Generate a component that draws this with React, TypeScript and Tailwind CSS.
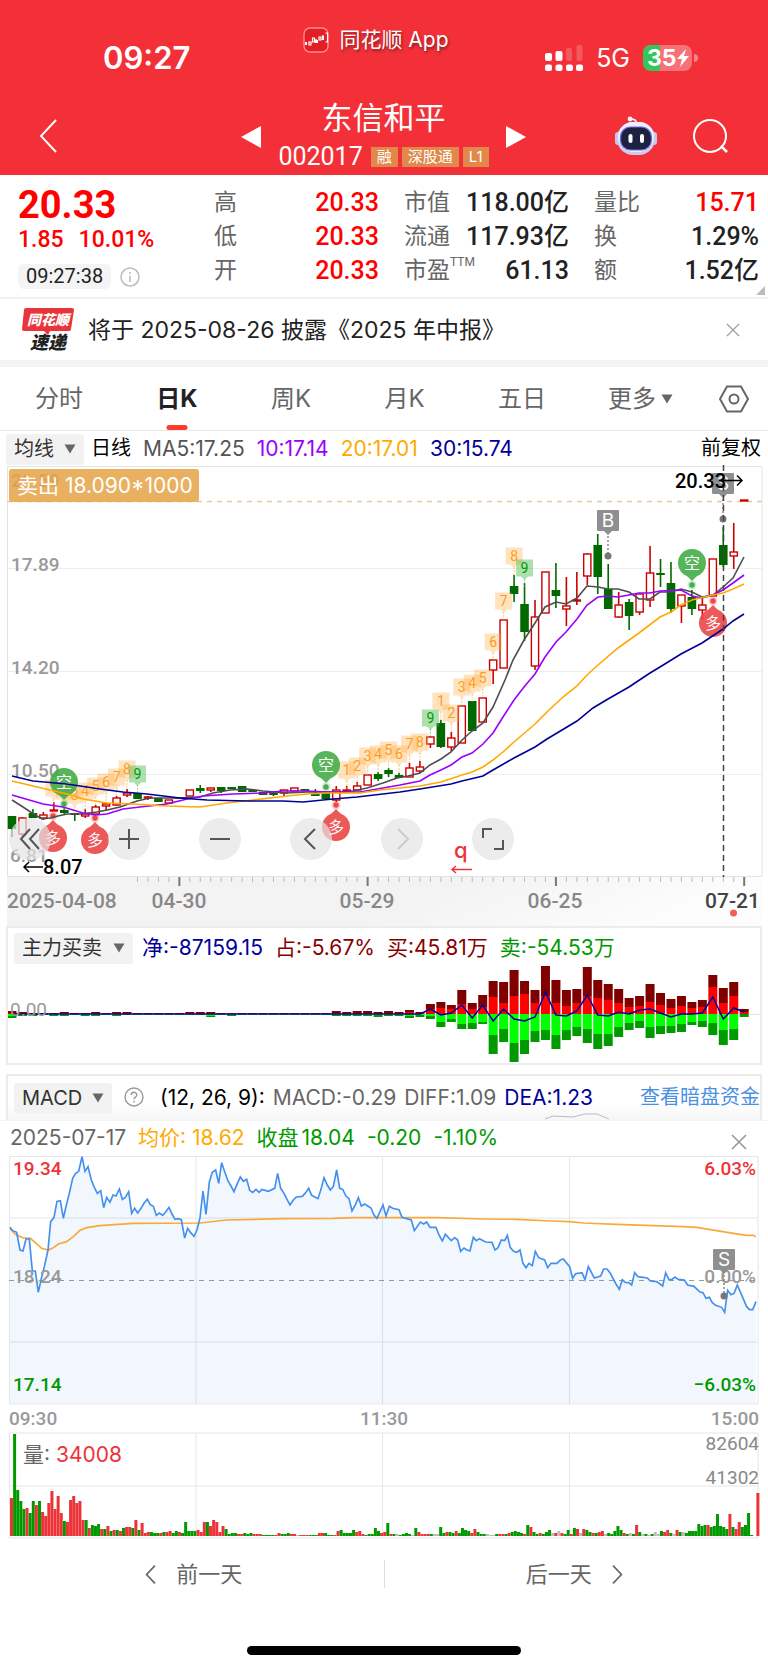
import type { ReactNode } from "react";

type Candle = [kind: "r" | "g", top: number, bottom: number, high: number, low: number];

const STEP = 10.46;
const cx = (index: number) => 12 + index * STEP;

const CANDLES: Candle[] = [
  ["g", 356, 369, 356, 377], ["r", 358, 374, 357, 377], ["g", 353, 358, 349, 358], ["r", 355, 358, 352, 360],
  ["r", 350, 351, 342, 351], ["g", 350, 353, 347, 354], ["g", 353, 355, 353, 361], ["r", 354, 356, 349, 358],
  ["r", 347, 354, 345, 354], ["r", 344, 346, 343, 350], ["r", 338, 345, 336, 346], ["r", 333, 335, 329, 337],
  ["g", 333, 339, 333, 339], ["r", 337, 338, 336, 340], ["g", 338, 342, 338, 342], ["r", 340, 343, 340, 343],
  ["g", 337, 339, 337, 339], ["r", 330, 336, 330, 336], ["g", 328, 331, 325, 333], ["r", 328, 330, 328, 332],
  ["g", 327, 331, 327, 333], ["g", 327, 329, 327, 329], ["g", 326, 332, 326, 332], ["g", 330, 332, 330, 332],
  ["g", 332, 335, 332, 335], ["g", 333, 335, 332, 336], ["r", 330, 333, 330, 336], ["r", 328, 331, 328, 331],
  ["g", 329, 331, 329, 331], ["g", 334, 336, 329, 336], ["g", 333, 339, 333, 339], ["r", 330, 340, 326, 342],
  ["r", 330, 331, 326, 332], ["r", 326, 330, 322, 330], ["r", 315, 325, 315, 325], ["g", 314, 319, 312, 321],
  ["g", 310, 314, 308, 317], ["g", 315, 318, 313, 318], ["r", 308, 317, 303, 317], ["r", 307, 311, 301, 313],
  ["r", 277, 284, 276, 288], ["g", 263, 287, 260, 288], ["r", 278, 287, 272, 291], ["r", 246, 283, 246, 283],
  ["g", 241, 271, 241, 271], ["r", 238, 262, 238, 262], ["r", 200, 210, 199, 224], ["r", 160, 208, 160, 208],
  ["g", 126, 134, 115, 142], ["g", 144, 172, 123, 181], ["r", 157, 206, 140, 210], ["r", 112, 153, 112, 153],
  ["g", 130, 136, 103, 148], ["r", 146, 149, 117, 166], ["r", 140, 141, 112, 145], ["r", 94, 116, 93, 125],
  ["g", 85, 117, 74, 134], ["g", 129, 149, 104, 149], ["r", 145, 157, 132, 158], ["g", 142, 156, 139, 170],
  ["r", 134, 152, 134, 155], ["r", 113, 140, 86, 147], ["g", 113, 115, 99, 127], ["g", 123, 149, 102, 153],
  ["r", 135, 146, 135, 163], ["g", 137, 149, 130, 155], ["r", 145, 150, 137, 160], ["r", 99, 136, 99, 136],
  ["g", 85, 105, 67, 107], ["r", 92, 96, 63, 109], ["r", 40, 41, 40, 41],
];

const MA_LINES = [
  {
    color: "#4d4d4d",
    points:
      "12,340 23,347 32,353 42,359 50,358 58,356 67,354 80,354 97,352 107,350 120,347 137,341 150,338 180,338 200,337 213,333 230,330 247,329 263,331 287,333 307,332 327,332 343,332 353,331 367,328 383,323 397,318 408,316 420,313 430,305 441,299 451,292 462,280 472,271 483,263 493,247 505,220 513,200 524,180 535,163 545,147 556,142 566,144 577,138 587,126 598,127 608,129 618,129 629,132 639,139 650,139 660,132 671,132 681,129 692,132 702,137 713,135 723,127 733,118 744,97",
  },
  {
    color: "#9900ff",
    points:
      "12,335 43,344 63,347 83,353 95,355 107,354 123,349 140,347 167,344 187,339 203,336 233,334 263,333 283,331 307,331 327,332 360,332 383,328 400,325 420,321 430,315 441,310 451,305 462,297 472,293 483,284 493,273 503,257 514,240 524,227 535,214 545,197 556,182 566,172 577,159 587,145 598,137 608,136 618,137 629,135 639,133 650,133 660,131 681,130 692,136 702,138 713,135 723,130 733,123 744,115",
  },
  {
    color: "#ffaa00",
    points:
      "12,321 33,326 50,330 67,334 83,339 107,343 133,344 167,346 200,347 227,343 253,340 287,336 307,334 327,333 360,333 380,330 400,328 420,326 441,322 462,315 472,312 483,307 493,300 503,292 514,282 535,264 547,252 563,237 577,226 587,215 598,205 618,188 639,173 660,157 671,152 681,145 692,140 713,135 723,133 733,129 744,124",
  },
  {
    color: "#000099",
    points:
      "12,316 33,321 67,324 100,329 123,332 147,334 180,338 207,340 247,341 283,341 303,342 333,339 357,337 400,332 420,329 451,324 462,321 483,316 493,310 514,298 535,287 547,279 577,261 593,248 608,239 629,227 650,213 660,207 681,194 702,183 723,169 733,161 744,154",
  },
];

// TD sequence tags: [candle index, digit, centre y]
const TD_TAGS = [
  [4, 1, 328], [5, 2, 331], [6, 3, 335], [7, 4, 331], [8, 5, 326], [9, 6, 322], [10, 7, 317], [11, 8, 309], [12, 9, 314],
  [32, 1, 310], [33, 2, 306], [34, 3, 296], [35, 4, 294], [36, 5, 290], [37, 6, 294], [38, 7, 284], [39, 8, 282], [40, 9, 258],
  [41, 1, 241], [42, 2, 253], [43, 3, 227], [44, 4, 223], [45, 5, 218], [46, 6, 182], [47, 7, 141], [48, 8, 96], [49, 9, 108],
];

// [dark red, red, green, dark green] bar ends, measured from the zero line
const FLOW: number[][] = [
  [3, 1, 2, 4], [2, 1, 1, 2], [1, 1, 1, 2], [1, 1, 1, 1], [1, 1, 1, 2], [2, 1, 1, 2], [1, 1, 1, 1], [1, 1, 1, 2],
  [2, 1, 1, 2], [1, 1, 1, 1], [2, 1, 1, 2], [2, 1, 1, 1], [1, 1, 1, 1], [1, 1, 1, 1], [1, 1, 1, 1], [1, 1, 1, 1],
  [1, 1, 1, 1], [2, 1, 1, 1], [2, 1, 1, 1], [2, 1, 2, 3], [1, 1, 1, 1], [1, 1, 1, 2], [1, 1, 1, 1], [1, 1, 1, 1],
  [1, 1, 1, 1], [1, 1, 1, 1], [1, 1, 1, 1], [1, 1, 1, 1], [1, 1, 1, 1], [1, 1, 1, 1], [1, 1, 1, 1], [3, 1, 1, 2],
  [2, 1, 1, 2], [3, 1, 1, 2], [3, 1, 1, 2], [2, 1, 1, 3], [3, 1, 1, 2], [2, 1, 1, 2], [4, 2, 2, 4], [2, 1, 1, 3],
  [10, 5, 2, 5], [12, 6, 8, 13], [9, 5, 5, 8], [24, 10, 10, 15], [11, 5, 9, 15], [19, 7, 8, 10], [33, 17, 21, 40],
  [32, 11, 15, 28], [44, 18, 29, 48], [33, 20, 26, 40], [24, 11, 17, 28], [48, 18, 16, 26], [34, 11, 21, 35],
  [24, 8, 16, 26], [25, 11, 13, 22], [47, 18, 15, 29], [34, 16, 20, 35], [30, 14, 20, 32], [25, 11, 13, 23],
  [16, 7, 9, 16], [18, 8, 7, 14], [30, 12, 13, 24], [21, 9, 12, 20], [15, 6, 12, 19], [18, 8, 10, 18], [12, 6, 8, 11],
  [14, 7, 7, 13], [39, 27, 9, 21], [26, 11, 16, 31], [32, 18, 15, 26], [5, 2, 0, 3],
];

const NET_FLOW = [
  5, -1, 1, 9, -4, 9, -7, 5, -5, -7, -3, 22, -1, -2, 3, 19, -1, -2, 2, 0, 4, 5, 1, -3, 0, 0, 1, 17, -5, 6, 2,
];

// both intraday lines are stored in thirds of a chart unit
const PRICE_POINTS =
  "30,322 38,332 50,337 60,390 69,393 78,357 88,357 97,453 106,453 115,517 124,475 133,440 144,390 152,305 162,292 171,244 181,242 190,295 199,255 208,220 218,175 227,160 236,154 246,110 255,154 264,140 274,180 283,202 292,220 302,212 311,263 320,232 330,247 339,225 348,228 358,207 367,238 376,232 386,215 395,280 404,265 413,279 423,265 432,250 442,238 451,254 460,259 469,286 478,279 488,286 497,276 507,262 516,282 525,298 535,296 544,299 554,354 563,325 572,338 582,349 591,330 600,293 609,213 618,283 628,186 637,157 647,150 656,190 665,128 674,155 684,183 693,198 702,215 712,190 721,171 730,184 740,178 749,211 758,217 768,208 777,217 786,208 805,214 824,205 833,160 842,205 852,220 861,238 870,255 880,240 889,231 907,229 917,218 926,205 935,226 954,236 963,208 972,173 982,195 991,210 1000,200 1010,150 1019,205 1028,208 1038,228 1047,236 1056,273 1066,255 1075,233 1084,258 1094,252 1113,264 1122,285 1131,295 1149,255 1158,288 1168,259 1178,265 1197,269 1206,292 1234,300 1243,332 1261,306 1271,312 1280,306 1290,322 1308,322 1317,345 1327,363 1336,343 1354,362 1364,353 1373,360 1382,394 1392,384 1401,390 1410,393 1420,352 1429,362 1438,356 1457,366 1476,367 1485,390 1494,383 1504,360 1514,362 1522,346 1531,383 1541,394 1550,397 1560,390 1569,430 1578,443 1587,430 1597,437 1606,394 1616,413 1634,420 1643,443 1653,430 1671,430 1681,420 1690,417 1709,440 1718,475 1727,461 1746,458 1755,479 1765,440 1783,474 1802,468 1811,447 1821,447 1830,458 1848,492 1858,508 1867,479 1876,487 1886,488 1895,495 1904,458 1914,470 1942,474 1951,483 1970,485 1988,498 1997,458 2007,479 2016,478 2025,471 2035,478 2053,480 2063,495 2082,499 2100,516 2109,518 2118,535 2128,532 2137,548 2147,556 2165,562 2174,577 2183,511 2193,524 2202,520 2212,495 2221,516 2240,560 2249,569 2258,569 2268,545";

const AVERAGE_POINTS =
  "30,325 45,342 70,354 90,354 105,367 125,385 145,390 160,383 175,372 200,365 220,350 240,331 260,323 300,317 400,310 600,309 680,300 850,296 1000,295 1060,293 1310,293 1450,297 1550,298 1650,303 1709,305 1750,309 1850,313 2050,320 2090,322 2150,332 2200,340 2240,346 2260,346 2268,350";

// one token per minute: colour (red, green, flat) and height
const VOLUME =
  "r38 g102 g46 g35 g27 r28 g23 g35 r31 g35 r24 r20 r33 r45 r27 r40 r23 g15 r14 r36 r40 r33 r35 r16 g16 r8 g11 g10 g12 r7 g7 r10 g5 r6 g6 r5 g8 r9 r9 g8 r16 g6 r13 r3 r4 g4 g3 g3 r3 g4 r4 r5 g3 g5 r4 g3 g14 g5 g5 g5 r6 r4 r14 g14 r10 r16 r14 r4 r10 g7 " +
  "g2 g3 g3 r2 r2 g3 g2 g3 r2 r2 r2 g1 g1 g1 g1 r1 r3 g2 g2 g3 r2 r2 f1 r1 r1 r1 g1 g1 g1 r3 r3 g3 g1 g1 r1 r5 g6 g3 g3 g3 g6 r4 r5 r2 g1 g2 g2 g8 g5 r3 r4 g13 r2 g2 f2 g1 g2 g3 g2 f1 g8 r4 r2 r2 r2 g2 f2 f2 g9 g3 r4 g4 g3 r5 g3 g8 g6 g5 r3 r7 " +
  "g4 g2 g2 f2 f1 f1 g2 r2 r2 g2 r3 g4 g5 g4 g3 r2 g11 r9 g4 g2 r3 g2 g4 g6 f3 r3 f5 r3 g2 g6 r2 g8 r7 f3 r7 g6 g4 r3 g3 r4 r5 f2 g3 g2 g5 g10 g6 r3 g2 f3 g2 r11 g4 f2 g2 f1 g2 f4 f2 g5 r4 r6 g3 f2 r6 g4 f4 g3 g5 g5 g5 g12 g10 g11 r11 g9 g10 g22 g10 g9 g7 r22 g9 r7 r14 g9 g11 g23 g1 f0 r43";

const VOLUME_COLORS: Record<string, string> = { r: "#ee3338", g: "#009900", f: "#bbbbbb" };

const QUOTES: { label: ReactNode; value: string; up?: boolean }[][] = [
  [
    { label: "高", value: "20.33", up: true },
    { label: "低", value: "20.33", up: true },
    { label: "开", value: "20.33", up: true },
  ],
  [
    { label: "市值", value: "118.00亿" },
    { label: "流通", value: "117.93亿" },
    {
      label: (
        <>
          市盈<sup className="-top-3 text-[12px]">TTM</sup>
        </>
      ),
      value: "61.13",
    },
  ],
  [
    { label: "量比", value: "15.71", up: true },
    { label: "换", value: "1.29%" },
    { label: "额", value: "1.52亿" },
  ],
];

function Caret({ className = "" }: { className?: string }) {
  return (
    <svg viewBox="0 0 12 10" className={`h-[10px] w-3 fill-[#666] ${className}`} aria-hidden="true">
      <path d="M0.5 0.5h11L6 9.5z" />
    </svg>
  );
}

function Chevron({ direction, className = "" }: { direction: "left" | "right"; className?: string }) {
  return (
    <svg viewBox="0 0 18 34" className={className} fill="none" stroke="currentColor" aria-hidden="true">
      <path d={direction === "left" ? "M17 1 2 17l15 16" : "M1 1l15 16L1 33"} />
    </svg>
  );
}

function Cross({ className }: { className: string }) {
  return (
    <svg viewBox="0 0 16 16" className={className} fill="none" stroke="#999" strokeWidth="1.6" aria-hidden="true">
      <path d="M1 1l14 14M15 1 1 15" />
    </svg>
  );
}

function IndicatorSelect({ label, options, className }: { label: string; options: string[]; className: string }) {
  return (
    <div className={`relative h-[31px] shrink-0 ${className}`}>
      <select
        aria-label={label}
        className="h-full w-full appearance-none rounded-[3px] bg-[#f2f2f2] pl-2 text-[20px] leading-[31px] text-[#333]"
      >
        {options.map((option) => (
          <option key={option}>{option}</option>
        ))}
      </select>
      <Caret className="pointer-events-none absolute top-[11px] right-[8px]" />
    </div>
  );
}

function StatusBar() {
  return (
    <div className="grid h-[84px] grid-cols-[1fr_auto_1fr] items-start pr-4">
      <div className="pt-[37px] pl-[103px] text-[31px] leading-[42px] font-semibold">09:27</div>
      <div className="flex items-center gap-[10px] pt-[25px] text-[21px] leading-[30px] [text-shadow:1px_2px_3px_rgba(0,0,0,0.45)]">
        <svg viewBox="0 0 26 26" className="h-[26px] w-[26px]" aria-hidden="true">
          <rect x="1" y="1" width="24" height="24" rx="6" fill="#e21f26" stroke="#ff8a8e" strokeWidth="1.4" />
          <g fill="none" stroke="#fff" strokeWidth="1.2">
            <path d="M3 15v3M6 15h2v3H6zM9.500 11h2v4h-2zM13 12v4M16 10h2v3h-2zM20 8v5M22.500 6h2v9h-2" />
          </g>
          <path d="M2 15h2v3H2zM12 13h3v3h-3zM19 9h2v4h-2z" fill="#fff" />
        </svg>
        同花顺 App
      </div>
      <div className="flex items-center justify-end gap-[13px] pt-[37px] pr-[54px]">
        <svg viewBox="0 0 38 26" className="h-[26px] w-[38px] fill-white" aria-hidden="true">
          <rect x="0" y="8" width="7" height="8" rx="2" />
          <rect x="10.500" y="6" width="7" height="10" rx="2" />
          <rect x="21" y="3" width="6" height="13" rx="2" opacity="0.2" />
          <rect x="31.500" y="0" width="6" height="16" rx="2" opacity="0.2" />
          <rect x="0" y="19.500" width="7" height="6.500" rx="2" />
          <rect x="10.500" y="19.500" width="7" height="6.500" rx="2" />
          <rect x="21" y="19.500" width="7" height="6.500" rx="2" />
          <rect x="31" y="19.500" width="7" height="6.500" rx="2" />
        </svg>
        <span className="text-[25px] leading-[42px]">5G</span>
        <svg viewBox="0 0 55 26" className="h-[26px] w-[55px]" aria-label="35%">
          <rect width="49" height="26" rx="8" fill="#fff" opacity="0.32" />
          <path d="M8 0h9v26H8a8 8 0 0 1-8-8V8a8 8 0 0 1 8-8z" fill="#33c75a" />
          <path d="M51 9a4 4 0 0 1 0 8z" fill="#fff" opacity="0.4" />
          <text x="4" y="21" fill="#fff" className="text-[23px] font-bold">35</text>
          <path d="M43 4 34 14h5l-2 8 9-11h-5z" fill="#fff" />
        </svg>
      </div>
    </div>
  );
}

function StockTag({ children }: { children: ReactNode }) {
  return <span className="bg-[#e0894a] px-[6px] text-[15px] leading-5">{children}</span>;
}

function Header() {
  return (
    <header className="bg-[#f33038] text-white">
      <StatusBar />
      <div className="grid h-[91px] grid-cols-[1fr_auto_1fr] items-start pr-[40px] pl-[39px]">
        <button type="button" aria-label="返回" className="mt-[35px] w-[18px]">
          <Chevron direction="left" className="h-[34px] w-[18px] stroke-2" />
        </button>
        <div className="flex items-start gap-[17px]">
          <button type="button" aria-label="上一只" className="mt-[42px]">
            <svg viewBox="0 0 20 22" className="h-[22px] w-5 fill-white" aria-hidden="true">
              <path d="M20 0v22L0 11z" />
            </svg>
          </button>
          <div className="flex flex-col items-center pt-3">
            <h1 className="text-[31px] leading-[44px]">东信和平</h1>
            <div className="flex items-center gap-1 pt-px">
              <span className="mr-1 font-[Roboto] text-[25px] leading-8">002017</span>
              <StockTag>融</StockTag>
              <StockTag>深股通</StockTag>
              <StockTag>L1</StockTag>
            </div>
          </div>
          <button type="button" aria-label="下一只" className="mt-[42px]">
            <svg viewBox="0 0 20 22" className="h-[22px] w-5 fill-white" aria-hidden="true">
              <path d="M0 0v22l20-11z" />
            </svg>
          </button>
        </div>
        <div className="flex justify-end gap-9 pt-8">
          <button type="button" aria-label="智能助手">
            <svg viewBox="0 0 42 40" className="h-10 w-[42px]" aria-hidden="true">
              <path d="M21 8c1-3-1-5-5-5" fill="none" stroke="#e8e9fb" strokeWidth="2" />
              <circle cx="15" cy="3" r="2.400" fill="#f2f3ff" />
              <rect x="0" y="16" width="6" height="13" rx="3" fill="#c5c8ea" />
              <rect x="36" y="16" width="6" height="13" rx="3" fill="#c5c8ea" />
              <rect x="2" y="6" width="38" height="33" rx="16" fill="#c9ccee" />
              <rect x="3" y="6" width="36" height="30" rx="15" fill="#eff0ff" />
              <rect x="5.500" y="11" width="31" height="23" rx="10" fill="#1b2340" stroke="#7d68dd" strokeWidth="1.200" />
              <rect x="13.500" y="18" width="4" height="9" rx="2" fill="#fff" />
              <rect x="25" y="18" width="4" height="9" rx="2" fill="#fff" />
            </svg>
          </button>
          <button type="button" aria-label="搜索">
            <svg viewBox="0 0 35 36" className="h-9 w-[35px]" fill="none" stroke="#fff" strokeWidth="2" aria-hidden="true">
              <circle cx="17" cy="18" r="16" />
              <path d="M28 28l6 6" strokeWidth="2.500" />
            </svg>
          </button>
        </div>
      </div>
    </header>
  );
}

function QuotePanel() {
  return (
    <section className="relative flex h-[124px] border-b-2 border-[#f2f2f2] pt-[11px] pr-[9px] font-[Roboto,'Noto_Sans_CJK_SC',sans-serif]">
      <div className="w-[214px] shrink-0 pl-[18px]">
        <p className="text-[38px] leading-[38px] font-bold text-[#ff0000]">20.33</p>
        <p className="pt-px text-[23px] leading-[30px] font-medium text-[#ff0000]">
          <span>1.85</span>
          <span className="ml-[15px]">10.01%</span>
        </p>
        <div className="mt-[9px] flex items-center gap-[9px]">
          <time className="rounded-md bg-[#f4f4f4] px-2 text-[20px] leading-[25px] text-[#222]">09:27:38</time>
          <svg viewBox="0 0 20 20" className="h-5 w-5" fill="none" stroke="#bbb" strokeWidth="1.500" aria-hidden="true">
            <circle cx="10" cy="10" r="9" />
            <path d="M10 8.500V15M10 5v2" />
          </svg>
        </div>
      </div>
      <div className="grid flex-1 grid-cols-3 gap-x-[25px]">
        {QUOTES.map((column, columnIndex) => (
          <dl key={columnIndex}>
            {column.map((item, index) => (
              <div key={index} className="flex h-[34px] items-center justify-between">
                <dt className="text-[23px] leading-[34px] whitespace-nowrap text-[#666]">{item.label}</dt>
                <dd
                  className={`text-[25px] leading-[34px] font-medium whitespace-nowrap ${item.up ? "text-[#ff0000]" : "text-[#222]"}`}
                >
                  {item.value}
                </dd>
              </div>
            ))}
          </dl>
        ))}
      </div>
      <svg viewBox="0 0 9 9" className="absolute right-[3px] bottom-[2px] h-[9px] w-[9px] fill-[#bbb]" aria-hidden="true">
        <path d="M9 0v9H0z" />
      </svg>
    </section>
  );
}

function NewsRow() {
  return (
    <section className="flex h-[61px] items-center pr-7 pl-[22px]">
      <svg viewBox="0 0 52 43" className="h-[43px] w-[52px]" role="img" aria-label="同花顺速递">
        <path d="M4 0h46q2 0 2 2l-3 19q0 2-2 2H28l-2 4-4-4H2q-2 0-2-2L2 2q0-2 2-2z" fill="#e8343a" />
        <text x="26" y="17" textAnchor="middle" fill="#fff" className="text-[14px] font-black italic">同花顺</text>
        <text x="26" y="41" textAnchor="middle" fill="#222" className="text-[18px] font-black italic">速递</text>
      </svg>
      <a href="#report" className="ml-[14px] flex-1 text-[23px] leading-8 text-[#222]">
        将于 2025-08-26 披露《2025 年中报》
      </a>
      <button type="button" aria-label="关闭公告">
        <Cross className="h-[14px] w-[14px]" />
      </button>
    </section>
  );
}

function PeriodTabs() {
  return (
    <nav className="flex h-[71px] items-center border-t-[7px] border-b border-t-[#f4f4f4] border-b-[#e8e8e8] pr-[19px] pl-[35px] text-[24px] leading-8 text-[#666]">
      <div className="flex h-full flex-1 items-center justify-between">
        <button type="button">分时</button>
        <button type="button" aria-current="page" className="relative h-full font-bold text-[#222]">
          日K
          <span className="absolute bottom-0 left-1/2 h-[5px] w-[21px] -translate-x-1/2 rounded-sm bg-[#ff3b30]" />
        </button>
        <button type="button">周K</button>
        <button type="button">月K</button>
        <button type="button">五日</button>
      </div>
      <button type="button" className="ml-[62px] flex items-center gap-[5px]">
        更多
        <Caret />
      </button>
      <button type="button" aria-label="设置" className="ml-[46px]">
        <svg viewBox="0 0 30 28" className="h-7 w-[30px]" fill="none" stroke="#666" strokeWidth="2" aria-hidden="true">
          <path d="M8 1.500h14L29 14l-7 12.500H8L1 14z" />
          <circle cx="15" cy="14" r="4.500" />
        </svg>
      </button>
    </nav>
  );
}

function Balloon({ x, y, kind }: { x: number; y: number; kind: "空" | "多" }) {
  const isShort = kind === "空";
  const color = isShort ? "#45ad48" : "#ec4646";
  const dir = isShort ? 1 : -1;
  return (
    <g>
      <circle cx={x} cy={y + dir * 22} r="4.500" fill={color} opacity="0.25" />
      <circle cx={x} cy={y + dir * 22} r="2.700" fill={color} />
      <g fill={color} opacity="0.9">
        <circle cx={x} cy={y} r="14" />
        <path d={`M${x - 6} ${y + dir * 12}h12L${x} ${y + dir * 18}z`} />
      </g>
      <text x={x} y={y + 6} textAnchor="middle" fill="#fff" className="text-[16px]">
        {kind}
      </text>
    </g>
  );
}

function TradeFlag({ x, y, label, dot }: { x: number; y: number; label: string; dot: number }) {
  return (
    <g>
      <path d={`M${x} ${y + 22}V${dot}`} stroke="#888" strokeDasharray="2 2" strokeWidth="1.500" />
      <circle cx={x} cy={dot} r="3.500" fill="#777" />
      <rect x={x - 11} y={y} width="22" height="21" rx="1" fill="#8f8f8f" />
      <path d={`M${x - 4} ${y + 21}h8l-4 4z`} fill="#8f8f8f" />
      <text x={x} y={y + 17} textAnchor="middle" fill="#fff" className="text-[19px]">
        {label}
      </text>
    </g>
  );
}

function CandleChart() {
  return (
    <svg viewBox="0 5 768 461" className="block w-full" role="img" aria-label="日K线图">
      <defs>
        <linearGradient id="axis" x1="0" x2="1" y1="0" y2="0.150">
          <stop offset="0.6" stopColor="#f3f3f3" />
          <stop offset="1" stopColor="#fdfdfd" />
        </linearGradient>
      </defs>
      <rect x="7" y="417" width="755" height="49" fill="url(#axis)" />
      <path d="M7 108.500H762M7 211.500H762M7 314.500H762" stroke="#ededed" />
      <path d="M7.500 416.500V6.500H762V416.500z" fill="none" stroke="#e4e4e4" />
      <path d="M7 41.500H762" stroke="#e6c79c" strokeWidth="1.500" strokeDasharray="5 5" />

      <g fill="#999" className="font-[Roboto] text-[19px] font-medium">
        <text x="11" y="27">21.59</text>
        <text x="11" y="111">17.89</text>
        <text x="11" y="214">14.20</text>
        <text x="11" y="317">10.50</text>
        <text x="10" y="402">6.81</text>
      </g>

      {CANDLES.map(([kind, top, bottom, high, low], index) => {
        const x = cx(index);
        const height = Math.max(bottom - top, 1);
        return kind === "g" ? (
          <g key={index} fill="#006a00">
            <rect x={x - 0.8} y={high} width="1.600" height={low - high} />
            <rect x={x - 4.3} y={top} width="8.600" height={height} />
          </g>
        ) : (
          <g key={index} stroke="#cc0000" fill="#fff">
            <path d={`M${x} ${high}V${low}`} strokeWidth="1.600" />
            <rect x={x - 3.6} y={top} width="7.200" height={height} strokeWidth="1.400" />
          </g>
        );
      })}

      {TD_TAGS.map(([index, digit, y]) => {
        const x = cx(index);
        const isNine = digit === 9;
        const color = isNine ? "#4cba4c" : "#ffa734";
        return (
          <g key={`${index}-${digit}`}>
            <path d={`M${x} ${y + 11}v9`} stroke={color} strokeDasharray="2 1" opacity="0.6" />
            <path
              d={`M${x - 8.5} ${y - 8.5}h17v17h-5l-3.500 3.500-3.500-3.500h-5z`}
              fill={color}
              opacity={isNine ? 0.45 : 0.32}
            />
            <text
              x={x}
              y={y + 5}
              textAnchor="middle"
              fill={isNine ? "#00990a" : "#ff9c1c"}
              className="font-[Roboto] text-[14px]"
            >
              {digit}
            </text>
          </g>
        );
      })}

      <Balloon x={64} y={322} kind="空" />
      <Balloon x={53} y={378} kind="多" />
      <Balloon x={95} y={380} kind="多" />
      <Balloon x={326} y={305} kind="空" />
      <Balloon x={336} y={367} kind="多" />
      <Balloon x={692} y={103} kind="空" />
      <Balloon x={713} y={163} kind="多" />

      {MA_LINES.map((line) => (
        <polyline key={line.color} points={line.points} fill="none" stroke={line.color} strokeWidth="1.600" />
      ))}

      <TradeFlag x={608} y={50} label="B" dot={96} />
      <TradeFlag x={723} y={13} label="S" dot={59} />
      <path d="M723.500 5V417" stroke="#444" strokeWidth="1.500" strokeDasharray="6 4" />

      <g fill="none" stroke="#000" strokeWidth="1.500">
        <path d="M723 20.500h19M737 15.500l5 5-5 5" />
        <path d="M43 407H24M29 402l-5 5 5 5" />
      </g>
      <g className="font-[Roboto] text-[20px] font-medium">
        <text x="675" y="28">20.33</text>
        <text x="43" y="414">8.07</text>
      </g>
      <text x="454" y="398" fill="#ee3338" className="text-[22px] font-medium">q</text>
      <path d="M472 409.500h-20M456 406l-4 3.500 4 3.500" fill="none" stroke="#ee3338" strokeWidth="1.500" />

      <rect x="9" y="9" width="190" height="33" rx="3" fill="#e6a245" opacity="0.85" />
      <text x="17" y="33" fill="#fff" className="text-[21px]">卖出 18.090*1000</text>

      {CANDLES.map((_, index) =>
        index < 12 ? null : (
          <path
            key={index}
            d={`M${cx(index)} 417v${index % 18 === 16 ? 9 : 5}`}
            stroke={index % 18 === 16 ? "#777" : "#bbb"}
            strokeWidth={index % 18 === 16 ? 2 : 1}
          />
        ),
      )}
      <g fill="#888" className="font-[Roboto] text-[21px] font-medium">
        <text x="7" y="448">2025-04-08</text>
        <text x="179" y="448" textAnchor="middle">04-30</text>
        <text x="367" y="448" textAnchor="middle">05-29</text>
        <text x="555" y="448" textAnchor="middle">06-25</text>
        <text x="760" y="448" textAnchor="end" fill="#444">07-21</text>
      </g>
      <circle cx="733.500" cy="453" r="3.500" fill="#f25d5d" />
    </svg>
  );
}

function ChartButton({ label, className = "", children }: { label: string; className?: string; children: ReactNode }) {
  return (
    <button
      type="button"
      aria-label={label}
      className={`flex h-[42px] w-[42px] items-center justify-center rounded-full bg-[#e4e4e4]/70 text-[#555] ${className}`}
    >
      <svg viewBox="0 0 22 22" className="h-[22px] w-[22px]" fill="none" stroke="currentColor" strokeWidth="2" aria-hidden="true">
        {children}
      </svg>
    </button>
  );
}

function KLinePanel() {
  return (
    <section>
      <div className="flex h-[34px] items-center gap-3 pr-[7px] pl-[6px] text-[21px] leading-[31px] whitespace-nowrap">
        <IndicatorSelect label="主图指标" options={["均线", "BOLL"]} className="-mr-[5px] w-[78px]" />
        <span className="text-[20px] text-black">日线</span>
        <span className="text-[#555]">MA5:17.25</span>
        <span className="text-[#9900ff]">10:17.14</span>
        <span className="text-[#ffaa00]">20:17.01</span>
        <span className="text-[#000099]">30:15.74</span>
        <button type="button" className="ml-auto text-[20px] text-black">前复权</button>
      </div>
      <div className="relative">
        <CandleChart />
        <div className="absolute bottom-[66px] left-[9px] flex gap-[49px]">
          <ChartButton label="最早" className="mr-2">
            <path d="M11 1 2 11l9 10M20 1l-9 10 9 10" />
          </ChartButton>
          <ChartButton label="放大">
            <path d="M1 11h20M11 1v20" />
          </ChartButton>
          <ChartButton label="缩小">
            <path d="M1 11h20" />
          </ChartButton>
          <ChartButton label="前移">
            <path d="M15 1 5 11l10 10" />
          </ChartButton>
          <ChartButton label="后移" className="text-[#ccc]">
            <path d="M7 1l10 10L7 21" />
          </ChartButton>
          <ChartButton label="全屏">
            <path d="M1 10V1h9M21 12v9h-9" />
          </ChartButton>
        </div>
      </div>
    </section>
  );
}

function FlowPanel() {
  const zero = 49;
  const netLine = FLOW.map((_, index) => {
    const net = index < 40 ? 0 : NET_FLOW[index - 40];
    return `${cx(index) - 8},${zero - net}`;
  }).join(" ");

  return (
    <section className="mx-[6px] border-2 border-[#ececec]">
      <div className="flex h-[37px] items-center gap-3 pt-[2px] pl-[6px] text-[21px] leading-[31px] whitespace-nowrap">
        <IndicatorSelect label="副图指标一" options={["主力买卖", "成交量"]} className="-mr-[3px] w-[119px]" />
        <span className="text-[#000099]">净:-87159.15</span>
        <span className="text-[#880000]">占:-5.67%</span>
        <span className="text-[#880000]">买:45.81万</span>
        <span className="text-[#009900]">卖:-54.53万</span>
      </div>
      <svg viewBox="0 0 752 98" className="block w-full" role="img" aria-label="主力买卖">
        <path d={`M0 ${zero + 0.5}H752`} stroke="#e4e4e4" />
        {FLOW.map(([buy, buyLarge, sellLarge, sell], index) => {
          const x = cx(index) - 12.5;
          return (
            <g key={index}>
              <rect x={x} y={zero - buy} width="9" height={buy - buyLarge} fill="#800000" />
              <rect x={x} y={zero - buyLarge} width="9" height={buyLarge} fill="#ff0000" />
              <rect x={x} y={zero} width="9" height={sellLarge} fill="#00ff00" />
              <rect x={x} y={zero + sellLarge} width="9" height={sell - sellLarge} fill="#009900" />
            </g>
          );
        })}
        <polyline points={netLine} fill="none" stroke="#000099" strokeWidth="1.500" />
        <text x="2" y="51" fill="#999" className="font-[Roboto] text-[19px]">0.00</text>
      </svg>
    </section>
  );
}

function MacdPanel() {
  return (
    <section className="mx-[6px] mt-[9px] border-2 border-b-0 border-[#ececec] bg-linear-to-b from-white from-60% to-[#f6f6f6]">
      <div className="relative flex h-11 items-center pb-[2px] pl-[6px] text-[21px] leading-[31px] whitespace-nowrap">
        <IndicatorSelect label="副图指标二" options={["MACD", "KDJ"]} className="w-[98px]" />
        <svg viewBox="0 0 20 20" className="ml-3 h-5 w-5" fill="none" stroke="#999" strokeWidth="1.400" aria-hidden="true">
          <circle cx="10" cy="10" r="9" />
          <path d="M7.200 8c0-3.600 5.600-3.600 5.600 0 0 2-2.800 2.200-2.800 4.200M10 13.800v1.600" />
        </svg>
        <div className="ml-4 flex gap-2">
          <span className="text-black">(12, 26, 9):</span>
          <span className="text-[#666]">MACD:-0.29</span>
          <span className="text-[#666]">DIFF:1.09</span>
          <span className="text-[#000099]">DEA:1.23</span>
        </div>
        <a href="#funds" className="ml-auto text-[20px] text-[#4a90e2]">
          查看暗盘资金
        </a>
        <svg viewBox="0 0 64 7" className="absolute bottom-0 left-[537px] h-[7px] w-16" fill="none" stroke="#bbb" aria-hidden="true">
          <path d="M0 6l8-3 20 1 12-3h12l12 5" />
        </svg>
      </div>
    </section>
  );
}

function IntradayChart() {
  return (
    <svg viewBox="0 35 768 251" className="block w-full" role="img" aria-label="分时走势">
      <path d="M9.500 36.500H758V284H9.500zM196 36V284M382.500 36V284M569.500 36V284M9 98H758M9 222H758" fill="none" stroke="#e6e6e6" />
      <path d="M9 160.500H758" stroke="#999" strokeDasharray="5 5" />
      <g transform="scale(0.33333)">
        <polygon points={`30,850 ${PRICE_POINTS} 2268,850`} fill="#4a90ee" opacity="0.07" />
        <polyline points={AVERAGE_POINTS} fill="none" stroke="#f9a93c" strokeWidth="5" />
        <polyline points={PRICE_POINTS} fill="none" stroke="#4490ee" strokeWidth="5" />
      </g>
      <g className="font-[Roboto] text-[19px] font-medium">
        <text x="13" y="55" fill="#ee3338">19.34</text>
        <text x="13" y="163" fill="#999">18.24</text>
        <text x="13" y="271" fill="#009900">17.14</text>
        <text x="756" y="55" textAnchor="end" fill="#ee3338">6.03%</text>
        <text x="756" y="163" textAnchor="end" fill="#999">0.00%</text>
        <text x="756" y="271" textAnchor="end" fill="#009900">−6.03%</text>
      </g>
      <TradeFlag x={724} y={129} label="S" dot={176} />
    </svg>
  );
}

function VolumeChart() {
  return (
    <svg viewBox="0 0 768 107" className="block w-full" role="img" aria-label="成交量">
      <path d="M9.500 1H758V106H9.500zM196 1V104M382.500 1V104M569.500 1V104M9 54H758" fill="none" stroke="#e6e6e6" />
      {VOLUME.split(" ").map((bar, index) => {
        const height = Number(bar.slice(1));
        return (
          <rect key={index} x={10 + index * 3.11} y={104 - height} width="3" height={height} fill={VOLUME_COLORS[bar[0]]} />
        );
      })}
      <text x="23" y="30" className="text-[21px]" fill="#666">
        量: <tspan fill="#ee3338">34008</tspan>
      </text>
      <g className="font-[Roboto] text-[19px]" fill="#888" textAnchor="end">
        <text x="759" y="18">82604</text>
        <text x="759" y="52">41302</text>
      </g>
    </svg>
  );
}

function DaySheet() {
  return (
    <section>
      <div className="flex h-[35px] items-center border-t border-[#f4f4f4] pr-[21px] pl-[10px] text-[21px] leading-8 whitespace-nowrap">
        <div className="flex gap-3 text-[#009900]">
          <span className="text-[#666]">2025-07-17</span>
          <span className="text-[#ffaa00]">均价: 18.62</span>
          <span className="flex gap-[3px]">
            <span>收盘</span>
            <span>18.04</span>
          </span>
          <span>-0.20</span>
          <span>-1.10%</span>
        </div>
        <button type="button" aria-label="关闭分时" className="ml-auto pt-[7px]">
          <Cross className="h-4 w-4" />
        </button>
      </div>
      <IntradayChart />
      <div className="flex h-[26px] items-center justify-between px-[9px] font-[Roboto] text-[19px] leading-6 font-medium text-[#999]">
        <span>09:30</span>
        <span>11:30</span>
        <span>15:00</span>
      </div>
      <VolumeChart />
      <div className="mt-[17px] flex h-9 items-center text-[22px] leading-8 text-[#666]">
        <button type="button" className="flex flex-1 items-center justify-center gap-5 pl-1">
          <Chevron direction="left" className="h-[19px] w-[11px] stroke-3" />
          前一天
        </button>
        <span className="h-7 w-px bg-[#ddd]" />
        <button type="button" className="flex flex-1 items-center justify-center gap-5 pr-1">
          后一天
          <Chevron direction="right" className="h-[19px] w-[11px] stroke-3" />
        </button>
      </div>
      <div className="flex justify-center pt-[54px] pb-[14px]">
        <span className="h-[9px] w-[274px] rounded-full bg-black" />
      </div>
    </section>
  );
}

export default function App() {
  return (
    <main className="w-full bg-white font-[Inter,'Noto_Sans_CJK_SC',sans-serif]">
      <Header />
      <QuotePanel />
      <NewsRow />
      <PeriodTabs />
      <KLinePanel />
      <FlowPanel />
      <MacdPanel />
      <DaySheet />
    </main>
  );
}
